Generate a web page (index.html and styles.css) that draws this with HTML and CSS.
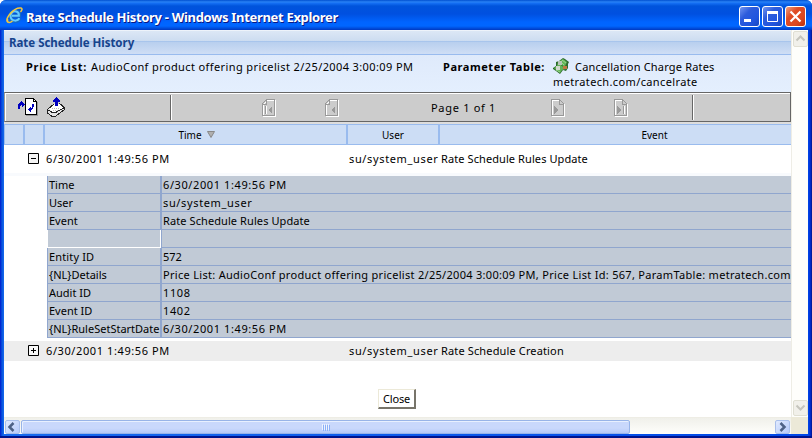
FILE: index.html
```html
<!DOCTYPE html>
<html lang="en">
<head>
<meta charset="utf-8">
<title>Rate Schedule History</title>
<link rel="stylesheet" href="styles.css">
</head>
<body>
<div class="window">
  <header class="titlebar">
    <svg class="ie" width="17" height="17" viewBox="0 0 17 17"><path d="M13.5 11.5C12 15 6 15 4.500 11C3 6.500 7 3 10.500 4.200C13 5 13.500 7 13.200 9H6" fill="none" stroke="#176bc4" stroke-width="3.600"/><path d="M13.300 11.200C12 14.500 6 14.500 4.800 10.800C3.500 6.500 7 3.500 10.300 4.500C12.500 5.200 13 7 12.900 8.700H6" fill="none" stroke="#65caff" stroke-width="2"/><path d="M2 15.500C-2 12 8 0 15 1C17 1.500 15.500 4 14.500 5M1.500 12C1 16.500 4 16 6.500 14" fill="none" stroke="#f4c83c" stroke-width="1.500"/></svg>
    <h1><span>Rate Schedule History - Windows Internet Explorer</span></h1>
    <div class="controls">
      <i class="ctl"><svg width="21" height="21"><path d="M5 14.500h7" stroke="#fff" stroke-width="3"/></svg></i>
      <i class="ctl"><svg width="21" height="21"><path d="M5.500 6v9.500h10V6M5 6.500h11" fill="none" stroke="#fff"/><path d="M5 6.500h11" stroke="#fff" stroke-width="3"/></svg></i>
      <i class="ctl close"><svg width="21" height="21"><path d="M5.500 5.500l10 10m0-10l-10 10" stroke="#fff" stroke-width="2.200"/></svg></i>
    </div>
  </header>
  <div class="client">
    <main class="page">
      <div class="caption"><span>Rate Schedule History</span></div>
      <div class="info">
        <div class="plabel"><b>Price List:</b></div>
        <div class="pval"><span>AudioConf product offering pricelist 2/25/2004 3:00:09 PM</span></div>
        <div class="tlabel"><b>Parameter Table:</b></div>
        <div class="tval">
          <div class="tline"><svg width="16" height="17" viewBox="0 0 16 17"><path d="M0 10l3-2V4l3-1 4-3 2 1 4 3-1 2v4l-2 3-3-1-3 4-4-3-3-2z" fill="#2c6a2c"/><path d="M1 10l3-2 1-4 5-3 4 3-2 4 1 3-4 1-2 3-5-4z" fill="#62b456"/><path d="M9 2l4 3M8 4l3 3M3 12l4 2" stroke="#9ad68c" fill="none"/><path d="M7 6l4 3" stroke="#2c6a2c"/><path d="M5 3h4v4H5z" fill="#b8c4b8"/><path d="M3 8h4v4H3z" fill="#d0d8cc"/><path d="M10 8h4v3h-4z" fill="#c07840"/></svg><span>Cancellation Charge Rates</span></div>
          <span class="turl">metratech.com/cancelrate</span>
        </div>
      </div>
      <div class="toolbar">
        <div class="tools">
          <svg width="22" height="20" viewBox="0 0 22 20" shape-rendering="crispEdges"><path d="M9 19h12V5h-1v13H9z" fill="#999"/><path d="M8.500 1.500h8l3 3v13h-11z" fill="#fff" stroke="#000"/><path d="M16.500 1.500v3h3" fill="none" stroke="#000"/><path d="M1 7h1V6h1V5h1V4h1v1h1v1h1v1h1v1H7v1H6v1H5V8H4v1H3v3H1zM15 7h2v3h-1v2h-1v1h-1v2h-1v-1h-1v-1h-1v-1h1v-1h1v-1h1v1h1z" fill="#0000c0"/></svg>
          <svg width="20" height="21" viewBox="0 0 20 21" shape-rendering="crispEdges"><path d="M9 6.500h5l4.500 4v2l-8.500 6.500H5.500l-4-3v-3z" fill="#e4e4e4"/><path d="M3 12l6-5h5l4 4-7 4H6z" fill="#fff"/><path d="M1.500 12.500L8.500 6.500M13.500 6.500l5 4v2l-8.500 6.500H5.500l-4-3v-3.500l4 2.500h5l8-4.500" fill="none" stroke="#222"/><path d="M6 11h8M7 13h5" stroke="#bbb" stroke-dasharray="1 1"/><path d="M10 0h1v1h1v1h1v1h1v2h-2v4H9V5H7V3h1V2h1V1h1z" fill="#0000c0"/></svg>
        </div>
        <div class="pager">
          <svg class="n1" width="14" height="18"><use href="#first"/></svg>
          <svg class="n2" width="14" height="18"><use href="#prev"/></svg>
          <span class="pageno">Page 1 of 1</span>
          <svg class="n3" width="14" height="18"><use href="#next"/></svg>
          <svg class="n4" width="14" height="18"><use href="#last"/></svg>
        </div>
        <div class="rest"></div>
      </div>
      <div class="cols"><i></i><i></i><div><span class="h-time">Time</span><svg width="8" height="7"><path d="M.5.5h7L4 6.500z" fill="#b0b0b0" stroke="#888"/></svg></div><div><span class="h-user">User</span></div><div><span class="h-event">Event</span></div></div>
      <div class="row first"><svg class="box" width="11" height="11"><use href="#minus"/></svg><span class="date">6/30/2001 1:49:56 PM</span><span class="user">su/system_user</span><span class="e1">Rate Schedule Rules Update</span></div>
      <div class="details">
        <div class="k"><span>Time</span></div><div class="v"><span class="date">6/30/2001 1:49:56 PM</span></div>
        <div class="k"><span>User</span></div><div class="v"><span class="user">su/system_user</span></div>
        <div class="k"><span>Event</span></div><div class="v"><span class="e1">Rate Schedule Rules Update</span></div>
        <div class="k blank"></div><div class="v"></div>
        <div class="k"><span class="ent">Entity ID</span></div><div class="v"><span>572</span></div>
        <div class="k"><span>{NL}Details</span></div><div class="v"><span class="long">Price List: AudioConf product offering pricelist 2/25/2004 3:00:09 PM, Price List Id: 567, ParamTable: metratech.com</span></div>
        <div class="k"><span>Audit ID</span></div><div class="v"><span class="num">1108</span></div>
        <div class="k"><span>Event ID</span></div><div class="v"><span class="num">1402</span></div>
        <div class="k"><span class="rule">{NL}RuleSetStartDate</span></div><div class="v"><span class="date">6/30/2001 1:49:56 PM</span></div>
      </div>
      <div class="row second"><svg class="box" width="11" height="11"><use href="#plus"/></svg><span class="date">6/30/2001 1:49:56 PM</span><span class="user">su/system_user</span><span class="e2">Rate Schedule Creation</span></div>
      <button class="btn"><span>Close</span></button>
    </main>
    <div class="vbar">
      <i><svg width="15" height="15"><path d="M3.500 9.500l4-4 4 4" fill="none" stroke="#c5c5bd" stroke-width="2"/></svg></i>
      <i><svg width="15" height="15"><path d="M3.500 5.500l4 4 4-4" fill="none" stroke="#c5c5bd" stroke-width="2"/></svg></i>
    </div>
    <div class="hbar">
      <i class="arrow"><svg width="14" height="14"><path d="M8.500 3l-4 4 4 4" fill="none" stroke="#4d6185" stroke-width="2.500"/></svg></i>
      <div class="thumb"><b></b><b></b><b></b><b></b></div>
      <i class="arrow right"><svg width="14" height="14"><path d="M5.500 3l4 4-4 4" fill="none" stroke="#4d6185" stroke-width="2.500"/></svg></i>
    </div>
    <div class="corner"></div>
  </div>
</div>
<svg width="0" height="0" class="defs"><defs>
  <g id="prev" fill="none" shape-rendering="crispEdges"><path d="M1.500 5.500l4-4h8v16h-12z" stroke="#fff"/><path d="M.5 4.500l4-4h8v16h-12zM4.500 1v4H1" stroke="#999"/><path d="M10 7v8l-4-4z" fill="#999"/></g>
  <g id="first" fill="none" shape-rendering="crispEdges"><path d="M1.500 5.500l4-4h8v16h-12z" stroke="#fff"/><path d="M.5 4.500l4-4h8v16h-12zM4.500 1v4H1M3.500 7v8" stroke="#999"/><path d="M4.500 7v8" stroke="#fff"/><path d="M10 7v8l-4-4z" fill="#999"/></g>
  <g id="next" fill="none" shape-rendering="crispEdges"><path d="M1.500 1.500h8l4 4v12h-12z" stroke="#fff"/><path d="M.5.5h8l4 4v12H.5zM8.500 1v4H12" stroke="#999"/><path d="M3 7v8l4-4z" fill="#999"/></g>
  <g id="last" fill="none" shape-rendering="crispEdges"><path d="M1.500 1.500h8l4 4v12h-12z" stroke="#fff"/><path d="M.5.5h8l4 4v12H.5zM8.500 1v4H12M9.500 7v8" stroke="#999"/><path d="M10.500 7v8" stroke="#fff"/><path d="M3 7v8l4-4z" fill="#999"/></g>
  <g id="minus"><path d="M.5.5h10v10H.5z" fill="#f4f4f4" stroke="#000"/><path d="M3 5.500h5" stroke="#000"/></g>
  <g id="plus"><path d="M.5.5h10v10H.5z" fill="#f8f8f8" stroke="#000"/><path d="M3 5.500h5M5.500 3v5" stroke="#000"/></g>
</defs></svg>
</body>
</html>
```

FILE: styles.css
```css
* { box-sizing: border-box; }
body { margin: 0; width: 812px; height: 438px; overflow: hidden; background: #fff; font: 11px/18px "Noto Sans", sans-serif; color: #000; }
svg { display: block; flex: none; }
.defs { position: absolute; }
span, b { white-space: nowrap; }
.window { width: 812px; height: 438px; padding: 0 4px 4px; border-radius: 6px 6px 0 0; overflow: hidden; background: linear-gradient(90deg, #0019cf, #0855dd 2px, #166aee 4px, #0048e8 808px, #0030d8 810px, #00138c); box-shadow: inset 0 -2px #00138c; }
.titlebar { display: flex; height: 30px; margin: 0 -4px; padding: 7px 6px 0 7px; background: linear-gradient(#0050d0 0, #2a83f5 2px, #1671f5 3px, #0054dc 6px, #0050e0 14px, #0064ff 22px, #0066ff 26px, #0050e0 28px, #0038c0 30px); }
.ie { margin-left: -1px; }
h1 { margin: 0 0 0 3px; flex: 1; font: bold 13px/20px "Noto Sans", sans-serif; color: #fff; text-shadow: 1px 1px #0a1883; }
h1 span { letter-spacing: -.31px; }
.controls { display: flex; gap: 2px; margin-top: -1px; }
.ctl { width: 21px; height: 21px; border: 1px solid #fff; border-radius: 3px; background: linear-gradient(135deg, #7395f0, #2d5cdc 35%, #2055df 70%, #1848c0); }
.ctl svg { margin: -1px; }
.ctl.close { background: linear-gradient(135deg, #f0a080, #df4c25 35%, #dd4820 70%, #b8300c); }
.client { display: grid; grid-template: 387px 17px / 787px 17px; }
.page { background: #fff; overflow: hidden; }
.caption { height: 25px; padding-left: 5px; border-bottom: 1px solid #99bbee; background: linear-gradient(#fff 0, #dce7f5 1px, #ccdcf0 11px, #a8c5ec 11px, #a8c5ec 12px, #b8cfee 12px, #cfdef5 24px); font-weight: bold; font-size: 11.500px; line-height: 26px; letter-spacing: -.03px; color: #17448c; }
.info { display: flex; height: 37px; background: linear-gradient(#dfeafb, #e4effe); line-height: 15px; }
.plabel { width: 87px; padding: 4px 0 0 22px; letter-spacing: .75px; }
.pval { width: 352px; padding-top: 4px; letter-spacing: .39px; }
.tlabel { width: 110px; padding-top: 4px; letter-spacing: .56px; }
.tval { padding-top: 3px; }
.tline { display: flex; gap: 6px; height: 16px; padding-top: 1px; letter-spacing: .18px; }
.tline svg { margin-top: -1px; }
.turl { display: block; letter-spacing: .37px; }
.toolbar { display: flex; height: 30px; border: 1px solid #666; border-left-color: #999; background: #ccc; box-shadow: inset 1px 1px #fff; }
.tools { display: flex; gap: 7px; width: 166px; height: 25px; margin-top: 2px; padding: 2px 0 0 12px; border-right: 1px solid #666; }
.pager { display: flex; align-items: center; width: 522px; height: 25px; margin-top: 2px; padding-left: 90px; border-left: 1px solid #fff; border-right: 1px solid #666; }
.n2 { margin-left: 49px; }
.pageno { width: 67px; margin-left: 92px; letter-spacing: .7px; }
.n3 { margin-left: 53px; }
.n4 { margin-left: 49px; }
.rest { width: 60px; height: 25px; margin-top: 2px; border-left: 1px solid #fff; }
.cols { display: grid; grid-template-columns: 20px 20px 303px 92px 1fr; height: 23px; border-top: 2px solid #ddd; font-size: 10px; line-height: 20px; }
.cols > * { display: flex; justify-content: center; height: 21px; border: 1px solid #99bbee; background: #ccddf5; }
.cols > :last-child { padding-left: 78px; border-right: 0; }
.cols svg { margin: 6px 0 0 5px; }
.h-time { margin-left: 2px; }
.row { display: grid; grid-template-columns: 18px 303px 92px 1fr; padding-left: 24px; line-height: 20px; }
.row.first { height: 31px; padding-top: 4px; background: linear-gradient(#fff 28px, #f8fafd 28px); }
.row.second { height: 20px; margin-top: 3px; background: #ededed; }
.box { margin-top: 4px; }
.date { letter-spacing: .6px; }
.user { letter-spacing: .64px; }
.e1 { letter-spacing: .09px; }
.e2 { letter-spacing: .14px; }
.long { letter-spacing: .3px; }
.num { letter-spacing: .6px; }
.ent { letter-spacing: .15px; }
.details { display: grid; grid-template-columns: 114px 1fr; margin-left: 43px; }
.k, .v { height: 18px; border-bottom: 1px solid #90a6ce; background: #c1cad6; line-height: 18px; overflow: hidden; }
.k { padding-left: 1px; border-left: 1px solid #90a6ce; border-right: 1px solid #90a6ce; }
.v { padding-left: 1px; border-left: 1px solid #90a6ce; }
.k.blank { border-color: #fff; }
.btn { display: block; width: 38px; height: 20px; margin: 28px 0 0 374px; padding: 0; border: solid; border-width: 1px 2px 2px 1px; border-color: #ece9d8 #77746a #77746a #ece9d8; background: #fff; font: 11px/16px "Noto Sans", sans-serif; letter-spacing: -.2px; color: #000; }
.vbar { display: flex; flex-direction: column; justify-content: space-between; padding: 1px; border-left: 1px solid #eeede5; background: #fefefb; }
.vbar i { width: 15px; height: 16px; border: 1px solid #e0dfd3; border-radius: 2px; background: #f1f0ea; }
.vbar svg { margin: -1px; }
.hbar { display: flex; height: 17px; padding: 2px 1px 1px; border-top: 1px solid #eeede5; background: linear-gradient(#f0f0ea, #fefefb); }
.arrow { width: 15px; height: 14px; border: 1px solid #a9bfea; border-radius: 2px; background: linear-gradient(135deg, #e1eafe, #b5cafa); }
.arrow svg { margin: -1px; }
.thumb { display: flex; justify-content: center; gap: 1px; width: 609px; height: 14px; margin-left: 1px; padding-top: 3px; border: 1px solid #98b4e8; border-radius: 2px; background: linear-gradient(#c9d8fc 60%, #b5c9f8); box-shadow: inset 1px 1px #e8f0ff; }
.thumb b { width: 1px; height: 6px; background: #eef4fe; box-shadow: 1px 1px #8cb0f8; }
.right { margin-left: auto; }
.corner { background: #ece9d8; }
```
